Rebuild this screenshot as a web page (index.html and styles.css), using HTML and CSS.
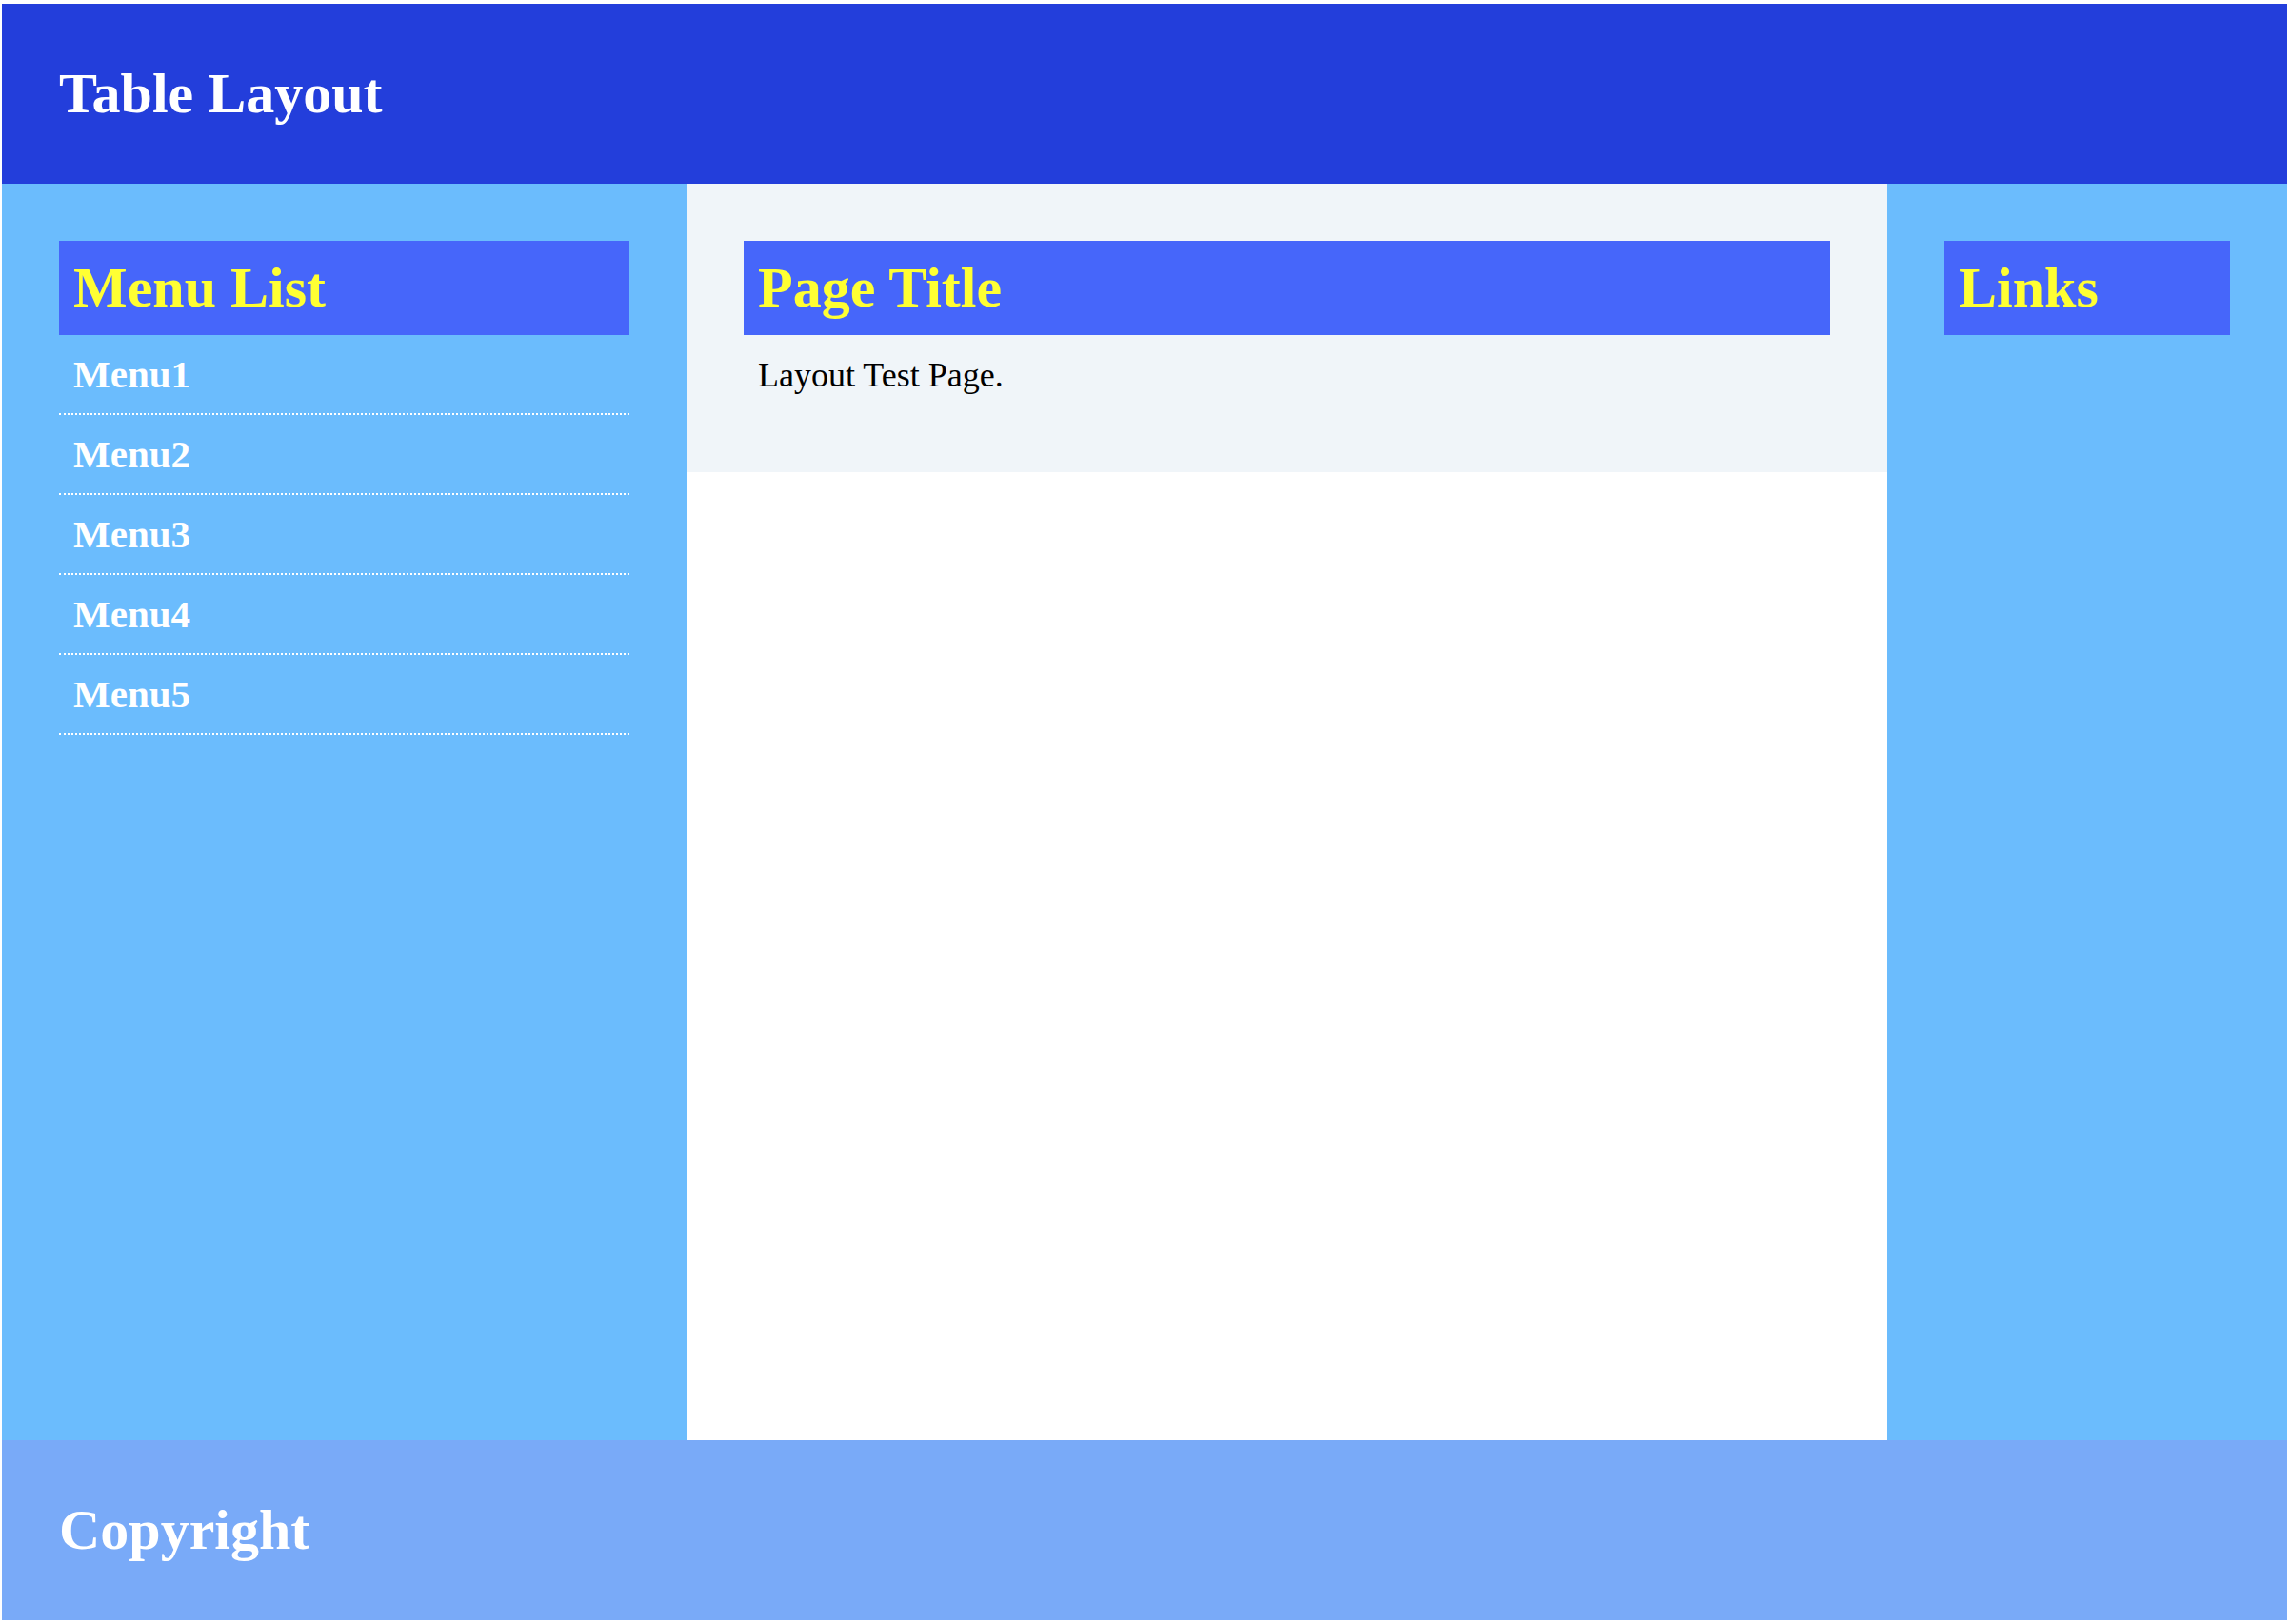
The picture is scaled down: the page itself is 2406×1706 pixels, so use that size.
FILE: index.html
```html
<!DOCTYPE html>
<html lang="en">
<head>
<meta charset="utf-8">
<title>Table Layout</title>
<link rel="stylesheet" href="styles.css">
</head>
<body>
<div class="page">
  <header class="site-header"><h1 class="site-title">Table Layout</h1></header>
  <aside class="side side-left">
    <h2 class="box-title">Menu List</h2>
    <ul class="menu">
      <li class="menu-item">Menu1</li>
      <li class="menu-item">Menu2</li>
      <li class="menu-item">Menu3</li>
      <li class="menu-item">Menu4</li>
      <li class="menu-item">Menu5</li>
    </ul>
  </aside>
  <main class="main">
    <div class="content">
      <h2 class="box-title">Page Title</h2>
      <p class="text">Layout Test Page.</p>
    </div>
  </main>
  <aside class="side side-right">
    <h2 class="box-title">Links</h2>
  </aside>
  <footer class="site-footer"><h1 class="site-title">Copyright</h1></footer>
</div>
</body>
</html>
```
FILE: styles.css
```css
html, body {
  margin: 0;
  padding: 0;
  background: #ffffff;
}
body {
  padding: 4px 4px 4px 2px;
  font-family: "Liberation Serif", "Times New Roman", serif;
}
.page {
  display: grid;
  grid-template-columns: 719px 1261px 420px;
  grid-template-rows: 189px 1320px 189px;
}
.site-header {
  grid-column: 1 / 4;
  background: #233edb;
  display: flex;
  align-items: center;
  padding-left: 60px;
}
.site-footer {
  grid-column: 1 / 4;
  background: #79aaf8;
  display: flex;
  align-items: center;
  padding-left: 60px;
}
.site-title {
  margin: 0;
  color: #ffffff;
  font-size: 60px;
  font-weight: bold;
  line-height: normal;
}
.side {
  background: #6bbcfd;
  padding: 60px;
}
.main {
  background: #ffffff;
}
.content {
  background: #f0f5f9;
  padding: 60px;
}
.box-title {
  margin: 0;
  background: #4666fa;
  color: #ffff33;
  font-size: 60px;
  font-weight: bold;
  line-height: 67px;
  padding: 16px 15px;
}
.menu {
  list-style: none;
  margin: 0;
  padding: 0;
}
.menu-item {
  color: #ffffff;
  font-size: 41px;
  font-weight: bold;
  line-height: 46px;
  padding: 18px 15px;
  border-bottom: 2px dotted #ffffff;
}
.text {
  margin: 22px 0;
  padding: 0 15px;
  font-size: 36px;
  line-height: 40px;
  color: #000000;
}
```
